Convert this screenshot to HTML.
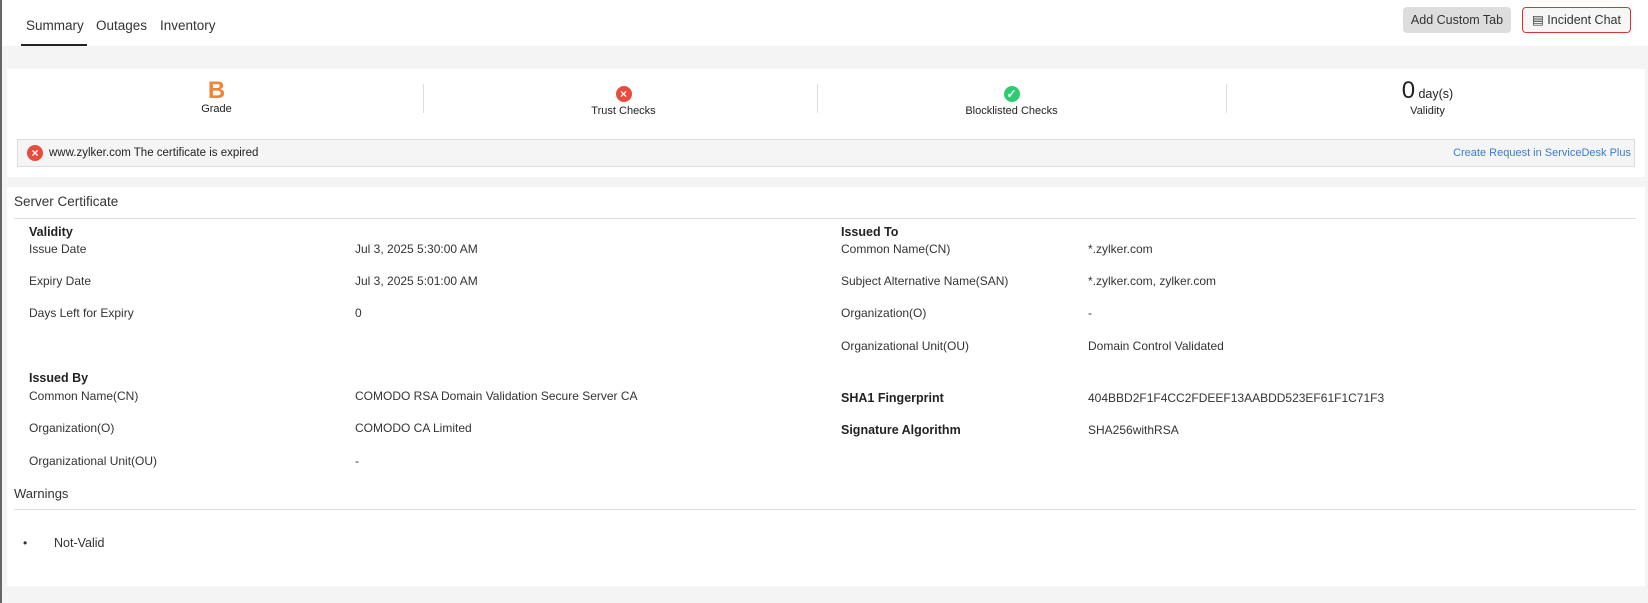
<!DOCTYPE html>
<html><head><meta charset="utf-8"><style>
*{box-sizing:border-box;margin:0;padding:0}
body{width:1648px;height:603px;background:#f4f4f4;font-family:"Liberation Sans",sans-serif;color:#222;position:relative;overflow:hidden;font-size:12px}
.top{position:absolute;left:0;top:0;width:1648px;height:46px;background:#fff}
.lb{position:absolute;left:0;top:0;width:2px;height:603px;background:#666}
.tab{position:absolute;top:18px;font-size:13.5px;color:#333}
.ul{position:absolute;left:21px;top:44px;width:66px;height:2px;background:#222}
.btn{position:absolute;top:7px;height:26px;border-radius:4px;font-size:12.5px;line-height:26px;text-align:center;color:#333}
.panel{position:absolute;left:7px;width:1638px;background:#fff}
.stat{position:absolute;top:0;width:409px;text-align:center}
.div{position:absolute;top:84px;width:1px;height:29px;background:#ddd}
.ic{display:inline-flex;align-items:center;justify-content:center;width:16px;height:16px;border-radius:50%;color:#fff;font-size:12px;font-weight:bold}
.lab{position:absolute;font-size:12px;color:#333}
.b{font-weight:bold;color:#222;font-size:12.5px}
</style></head><body>
<div class="top"></div>
<div class="lb"></div>
<div class="tab" style="left:26px">Summary</div>
<div class="tab" style="left:96px">Outages</div>
<div class="tab" style="left:160px">Inventory</div>
<div class="ul"></div>
<div class="btn" style="left:1403px;width:108px;background:#ddd">Add Custom Tab</div>
<div class="btn" style="left:1522px;width:109px;border:1px solid #d33;line-height:24px;background:#f6f6f6">&#9636; Incident Chat</div>

<div class="panel" style="top:69px;height:108px">
 <div class="stat" style="left:5px;top:10px"><div style="color:#f0843b;font-size:24px;font-weight:bold;line-height:24px">B</div><div style="font-size:11px">Grade</div></div>
 <div class="stat" style="left:412px;top:17px"><span class="ic" style="background:#e74c3c">×</span><div style="font-size:11px;margin-top:3px">Trust Checks</div></div>
 <div class="stat" style="left:800px;top:17px"><span class="ic" style="background:#2ecc71">✓</span><div style="font-size:11px;margin-top:3px">Blocklisted Checks</div></div>
 <div class="stat" style="left:1216px;top:8px"><span style="font-size:24px">0</span> <span style="font-size:12.5px">day(s)</span><div style="font-size:11px">Validity</div></div>
 <div style="position:absolute;left:10px;top:70px;width:1618px;height:28px;border:1px solid #ddd;background:#f5f5f5">
  <span class="ic" style="background:#e74c3c;position:absolute;left:9px;top:5px">×</span>
  <span style="position:absolute;left:31px;top:7px;font-size:11.5px">www.zylker.com The certificate is expired</span>
  <span style="position:absolute;right:3px;top:7px;font-size:11px;color:#3a7bd5">Create Request in ServiceDesk Plus</span>
 </div>
</div>
<div class="div" style="left:423px"></div><div class="div" style="left:817px"></div><div class="div" style="left:1226px"></div>

<div class="panel" style="top:187px;height:399px"></div>
<div class="lab" style="left:14px;top:194px;font-size:13.5px">Server Certificate</div>
<div style="position:absolute;left:14px;top:218px;width:1622px;height:1px;background:#ddd"></div>
<div class="lab b" style="left:29px;top:225px">Validity</div>
<div class="lab" style="left:29px;top:242px">Issue Date</div><div class="lab" style="left:355px;top:242px">Jul 3, 2025 5:30:00 AM</div>
<div class="lab" style="left:29px;top:274px">Expiry Date</div><div class="lab" style="left:355px;top:274px">Jul 3, 2025 5:01:00 AM</div>
<div class="lab" style="left:29px;top:306px">Days Left for Expiry</div><div class="lab" style="left:355px;top:306px">0</div>
<div class="lab b" style="left:29px;top:371px">Issued By</div>
<div class="lab" style="left:29px;top:389px">Common Name(CN)</div><div class="lab" style="left:355px;top:389px">COMODO RSA Domain Validation Secure Server CA</div>
<div class="lab" style="left:29px;top:421px">Organization(O)</div><div class="lab" style="left:355px;top:421px">COMODO CA Limited</div>
<div class="lab" style="left:29px;top:454px">Organizational Unit(OU)</div><div class="lab" style="left:355px;top:454px">-</div>
<div class="lab b" style="left:841px;top:225px">Issued To</div>
<div class="lab" style="left:841px;top:242px">Common Name(CN)</div><div class="lab" style="left:1088px;top:242px">*.zylker.com</div>
<div class="lab" style="left:841px;top:274px">Subject Alternative Name(SAN)</div><div class="lab" style="left:1088px;top:274px">*.zylker.com, zylker.com</div>
<div class="lab" style="left:841px;top:306px">Organization(O)</div><div class="lab" style="left:1088px;top:306px">-</div>
<div class="lab" style="left:841px;top:339px">Organizational Unit(OU)</div><div class="lab" style="left:1088px;top:339px">Domain Control Validated</div>
<div class="lab b" style="left:841px;top:391px">SHA1 Fingerprint</div><div class="lab" style="left:1088px;top:391px">404BBD2F1F4CC2FDEEF13AABDD523EF61F1C71F3</div>
<div class="lab b" style="left:841px;top:423px">Signature Algorithm</div><div class="lab" style="left:1088px;top:423px">SHA256withRSA</div>
<div class="lab" style="left:14px;top:486px;font-size:13px">Warnings</div>
<div style="position:absolute;left:14px;top:509px;width:1622px;height:1px;background:#ddd"></div>
<div class="lab" style="left:23px;top:536px">•</div><div class="lab" style="left:54px;top:536px;font-size:12.5px">Not-Valid</div>
</body></html>
